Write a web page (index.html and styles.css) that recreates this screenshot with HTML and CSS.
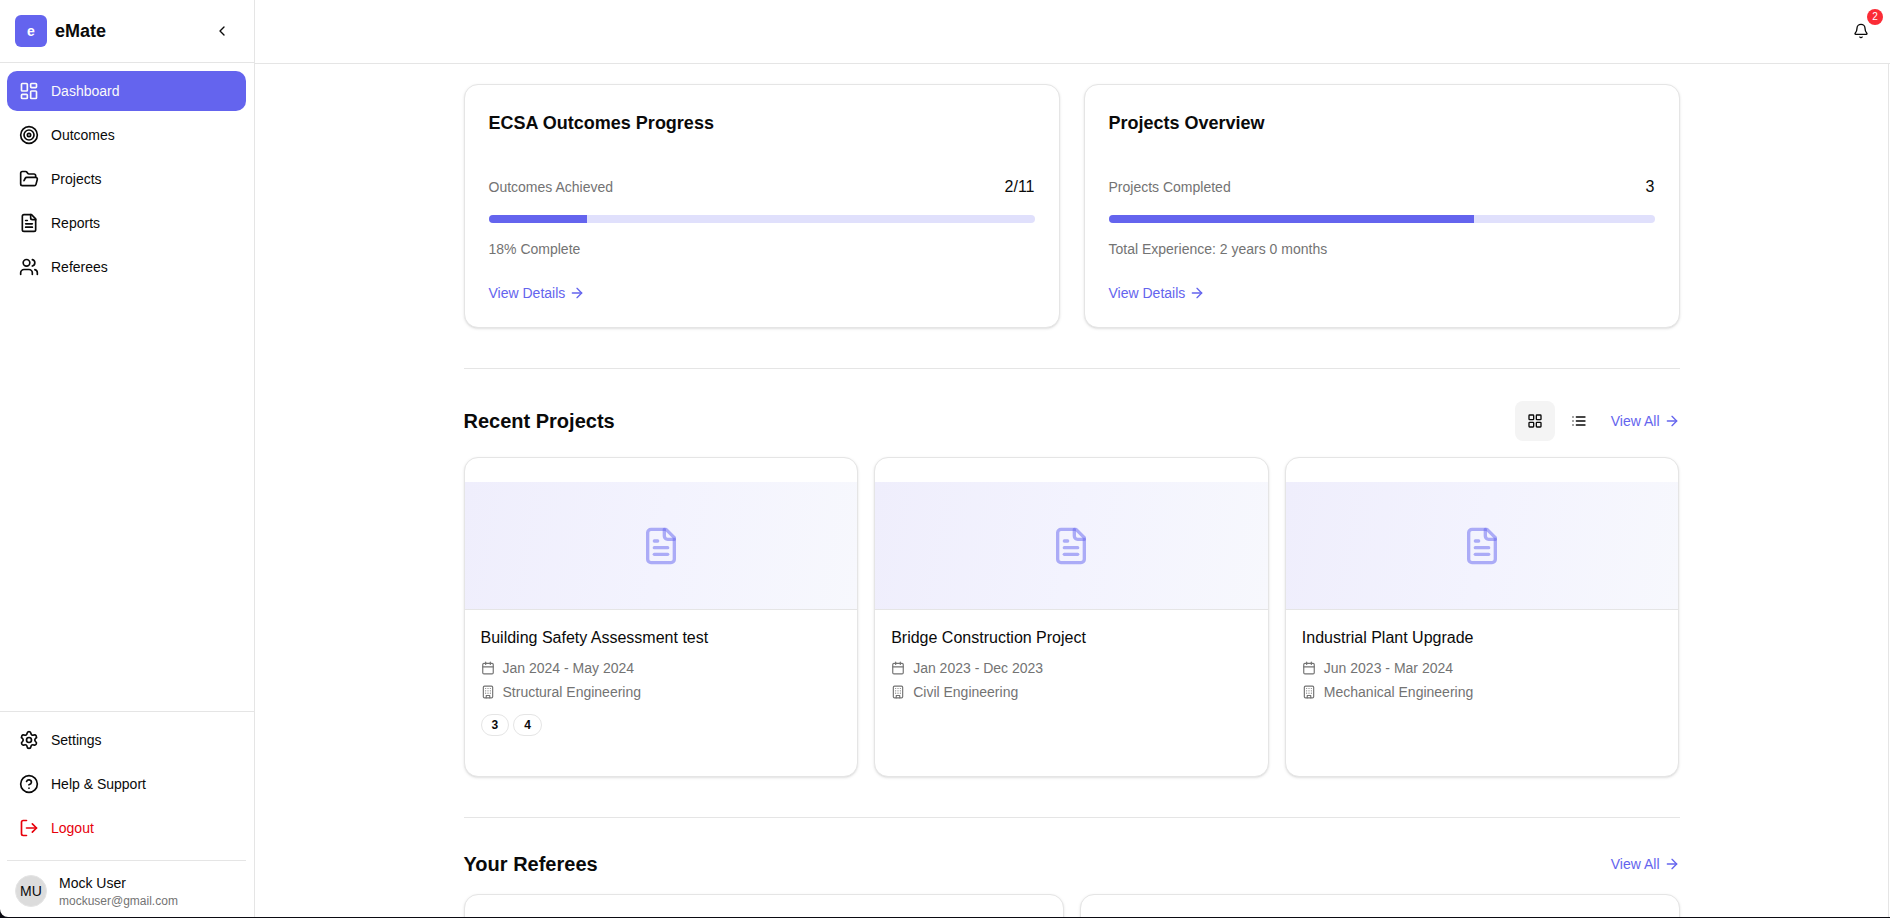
FILE: index.html
```html
<!DOCTYPE html>
<html lang="en">
<head>
<meta charset="utf-8">
<meta name="viewport" content="width=device-width, initial-scale=1">
<title>eMate Dashboard</title>
<link rel="stylesheet" href="styles.css">
</head>
<body>
<svg class="sprite" aria-hidden="true">
  <symbol id="i-dashboard" viewBox="0 0 24 24"><rect width="7" height="9" x="3" y="3" rx="1"/><rect width="7" height="5" x="14" y="3" rx="1"/><rect width="7" height="9" x="14" y="12" rx="1"/><rect width="7" height="5" x="3" y="16" rx="1"/></symbol>
  <symbol id="i-target" viewBox="0 0 24 24"><circle cx="12" cy="12" r="10"/><circle cx="12" cy="12" r="6"/><circle cx="12" cy="12" r="2"/></symbol>
  <symbol id="i-folder" viewBox="0 0 24 24"><path d="m6 14 1.5-2.9A2 2 0 0 1 9.24 10H20a2 2 0 0 1 1.94 2.5l-1.54 6a2 2 0 0 1-1.95 1.5H4a2 2 0 0 1-2-2V5a2 2 0 0 1 2-2h3.9a2 2 0 0 1 1.69.9l.81 1.2a2 2 0 0 0 1.67.9H18a2 2 0 0 1 2 2v2"/></symbol>
  <symbol id="i-file" viewBox="0 0 24 24"><path d="M15 2H6a2 2 0 0 0-2 2v16a2 2 0 0 0 2 2h12a2 2 0 0 0 2-2V7Z"/><path d="M14 2v4a2 2 0 0 0 2 2h4"/><path d="M10 9H8"/><path d="M16 13H8"/><path d="M16 17H8"/></symbol>
  <symbol id="i-users" viewBox="0 0 24 24"><path d="M16 21v-2a4 4 0 0 0-4-4H6a4 4 0 0 0-4 4v2"/><circle cx="9" cy="7" r="4"/><path d="M22 21v-2a4 4 0 0 0-3-3.87"/><path d="M16 3.13a4 4 0 0 1 0 7.75"/></symbol>
  <symbol id="i-settings" viewBox="0 0 24 24"><path d="M9.671 4.136a2.34 2.34 0 0 1 4.659 0 2.34 2.34 0 0 0 3.319 1.915 2.34 2.34 0 0 1 2.33 4.033 2.34 2.34 0 0 0 0 3.831 2.34 2.34 0 0 1-2.33 4.033 2.34 2.34 0 0 0-3.319 1.915 2.34 2.34 0 0 1-4.659 0 2.34 2.34 0 0 0-3.32-1.915 2.34 2.34 0 0 1-2.33-4.033 2.34 2.34 0 0 0 0-3.831A2.34 2.34 0 0 1 6.35 6.051a2.34 2.34 0 0 0 3.319-1.915"/><circle cx="12" cy="12" r="3"/></symbol>
  <symbol id="i-help" viewBox="0 0 24 24"><circle cx="12" cy="12" r="10"/><path d="M9.09 9a3 3 0 0 1 5.83 1c0 2-3 3-3 3"/><path d="M12 17h.01"/></symbol>
  <symbol id="i-logout" viewBox="0 0 24 24"><path d="M9 21H5a2 2 0 0 1-2-2V5a2 2 0 0 1 2-2h4"/><path d="m16 17 5-5-5-5"/><path d="M21 12H9"/></symbol>
  <symbol id="i-chevron" viewBox="0 0 24 24"><path d="m15 18-6-6 6-6"/></symbol>
  <symbol id="i-arrow" viewBox="0 0 24 24"><path d="M5 12h14"/><path d="m12 5 7 7-7 7"/></symbol>
  <symbol id="i-bell" viewBox="0 0 24 24"><path d="M10.268 21a2 2 0 0 0 3.464 0"/><path d="M3.262 15.326A1 1 0 0 0 4 17h16a1 1 0 0 0 .74-1.673C19.41 13.956 18 12.499 18 8A6 6 0 0 0 6 8c0 4.499-1.411 5.956-2.738 7.326"/></symbol>
  <symbol id="i-grid" viewBox="0 0 24 24"><rect width="7" height="7" x="3" y="3" rx="1"/><rect width="7" height="7" x="14" y="3" rx="1"/><rect width="7" height="7" x="14" y="14" rx="1"/><rect width="7" height="7" x="3" y="14" rx="1"/></symbol>
  <symbol id="i-list" viewBox="0 0 24 24"><path d="M3 12h.01"/><path d="M3 18h.01"/><path d="M3 6h.01"/><path d="M8 12h13"/><path d="M8 18h13"/><path d="M8 6h13"/></symbol>
  <symbol id="i-calendar" viewBox="0 0 24 24"><path d="M8 2v4"/><path d="M16 2v4"/><rect width="18" height="18" x="3" y="4" rx="2"/><path d="M3 10h18"/></symbol>
  <symbol id="i-building" viewBox="0 0 24 24"><rect width="16" height="20" x="4" y="2" rx="2"/><path d="M9 22v-4h6v4"/><path d="M8 6h.01"/><path d="M16 6h.01"/><path d="M12 6h.01"/><path d="M12 10h.01"/><path d="M12 14h.01"/><path d="M16 10h.01"/><path d="M16 14h.01"/><path d="M8 10h.01"/><path d="M8 14h.01"/></symbol>
</svg>

<div class="app">
  <aside class="sidebar">
    <div class="brand">
      <span class="brand-mark">e</span>
      <span class="brand-name">eMate</span>
      <button class="collapse" type="button" aria-label="Collapse sidebar"><svg class="icon icon-sm"><use href="#i-chevron"/></svg></button>
    </div>
    <nav class="nav" aria-label="Main">
      <a class="nav-item active" href="#dashboard" aria-current="page"><svg class="icon icon-md"><use href="#i-dashboard"/></svg>Dashboard</a>
      <a class="nav-item" href="#outcomes"><svg class="icon icon-md"><use href="#i-target"/></svg>Outcomes</a>
      <a class="nav-item" href="#projects"><svg class="icon icon-md"><use href="#i-folder"/></svg>Projects</a>
      <a class="nav-item" href="#reports"><svg class="icon icon-md"><use href="#i-file"/></svg>Reports</a>
      <a class="nav-item" href="#referees"><svg class="icon icon-md"><use href="#i-users"/></svg>Referees</a>
    </nav>
    <div class="sidebar-foot">
      <a class="nav-item" href="#settings"><svg class="icon icon-md"><use href="#i-settings"/></svg>Settings</a>
      <a class="nav-item" href="#help"><svg class="icon icon-md"><use href="#i-help"/></svg>Help &amp; Support</a>
      <button class="nav-item danger" type="button"><svg class="icon icon-md"><use href="#i-logout"/></svg>Logout</button>
      <div class="account">
        <span class="avatar">MU</span>
        <div>
          <div class="account-name">Mock User</div>
          <div class="account-mail">mockuser@gmail.com</div>
        </div>
      </div>
    </div>
  </aside>

  <div class="workspace">
    <header class="topbar">
      <button class="bell" type="button" aria-label="Notifications"><svg class="icon icon-sm"><use href="#i-bell"/></svg><span class="bell-count">2</span></button>
    </header>
    <main class="content">
      <div class="column">
        <section class="overview">
          <article class="card stat">
            <h2 class="card-title">ECSA Outcomes Progress</h2>
            <div class="stat-row"><span class="muted">Outcomes Achieved</span><span class="stat-value">2/11</span></div>
            <div class="meter" role="progressbar" aria-label="Outcomes achieved" aria-valuenow="18"><div class="meter-fill" style="width:18%"></div></div>
            <p class="muted">18% Complete</p>
            <a class="link stat-link" href="#outcomes">View Details<svg class="icon icon-sm"><use href="#i-arrow"/></svg></a>
          </article>
          <article class="card stat">
            <h2 class="card-title">Projects Overview</h2>
            <div class="stat-row"><span class="muted">Projects Completed</span><span class="stat-value">3</span></div>
            <div class="meter" role="progressbar" aria-label="Projects completed" aria-valuenow="67"><div class="meter-fill" style="width:67%"></div></div>
            <p class="muted">Total Experience: 2 years 0 months</p>
            <a class="link stat-link" href="#projects">View Details<svg class="icon icon-sm"><use href="#i-arrow"/></svg></a>
          </article>
        </section>

        <section class="section">
          <div class="section-head">
            <h2 class="section-title">Recent Projects</h2>
            <div class="section-tools">
              <div class="view-toggle">
                <button class="toggle on" type="button" aria-label="Grid view"><svg class="icon icon-sm"><use href="#i-grid"/></svg></button>
                <button class="toggle" type="button" aria-label="List view"><svg class="icon icon-sm"><use href="#i-list"/></svg></button>
              </div>
              <a class="link" href="#projects">View All<svg class="icon icon-sm"><use href="#i-arrow"/></svg></a>
            </div>
          </div>
          <div class="projects">
            <article class="card project">
              <div class="cover"><svg class="icon icon-xl"><use href="#i-file"/></svg></div>
              <div class="project-body">
                <h3 class="project-title">Building Safety Assessment test</h3>
                <div class="meta muted"><svg class="icon icon-xs"><use href="#i-calendar"/></svg>Jan 2024 - May 2024</div>
                <div class="meta muted"><svg class="icon icon-xs"><use href="#i-building"/></svg>Structural Engineering</div>
                <div class="tags"><span class="tag">3</span><span class="tag">4</span></div>
              </div>
            </article>
            <article class="card project">
              <div class="cover"><svg class="icon icon-xl"><use href="#i-file"/></svg></div>
              <div class="project-body">
                <h3 class="project-title">Bridge Construction Project</h3>
                <div class="meta muted"><svg class="icon icon-xs"><use href="#i-calendar"/></svg>Jan 2023 - Dec 2023</div>
                <div class="meta muted"><svg class="icon icon-xs"><use href="#i-building"/></svg>Civil Engineering</div>
              </div>
            </article>
            <article class="card project">
              <div class="cover"><svg class="icon icon-xl"><use href="#i-file"/></svg></div>
              <div class="project-body">
                <h3 class="project-title">Industrial Plant Upgrade</h3>
                <div class="meta muted"><svg class="icon icon-xs"><use href="#i-calendar"/></svg>Jun 2023 - Mar 2024</div>
                <div class="meta muted"><svg class="icon icon-xs"><use href="#i-building"/></svg>Mechanical Engineering</div>
              </div>
            </article>
          </div>
        </section>

        <section class="section">
          <div class="section-head">
            <h2 class="section-title">Your Referees</h2>
            <a class="link" href="#referees">View All<svg class="icon icon-sm"><use href="#i-arrow"/></svg></a>
          </div>
          <div class="referees">
            <article class="card referee"></article>
            <article class="card referee"></article>
          </div>
        </section>
      </div>
    </main>
  </div>
</div>
</body>
</html>
```
FILE: styles.css
```css
:root {
  --primary: #6464ee;
  --primary-soft: #e0e0fc;
  --ink: #0a0a0a;
  --muted: #737373;
  --line: #e5e5e5;
}

* { box-sizing: border-box; }

body {
  margin: 0;
  background: #0b0b12;
  color: var(--ink);
  font: 14px/20px "Liberation Sans", Arial, sans-serif;
}

h2, h3, p { margin: 0; }
a { color: inherit; text-decoration: none; }
button { border: 0; padding: 0; background: none; color: inherit; font: inherit; cursor: pointer; }

.sprite { position: absolute; width: 0; height: 0; }

.icon {
  flex: none;
  fill: none;
  stroke: currentColor;
  stroke-width: 2;
  stroke-linecap: round;
  stroke-linejoin: round;
}
.icon-xs { width: 14px; height: 14px; }
.icon-sm { width: 16px; height: 16px; }
.icon-md { width: 20px; height: 20px; }
.icon-xl { width: 40px; height: 40px; }

.app {
  display: flex;
  height: calc(100vh - 1px);
  overflow: hidden;
  background: #fff;
  border-bottom-left-radius: 8px;
}

/* Sidebar */
.sidebar {
  display: flex;
  flex: none;
  flex-direction: column;
  width: 255px;
  border-right: 1px solid var(--line);
}
.brand {
  display: flex;
  align-items: center;
  gap: 8px;
  height: 63px;
  padding: 0 16px 0 15px;
  border-bottom: 1px solid var(--line);
}
.brand-mark {
  display: grid;
  place-items: center;
  width: 32px;
  height: 32px;
  border-radius: 6px;
  background: var(--primary);
  color: #fff;
  font-weight: 700;
}
.brand-name { font-size: 18px; line-height: 28px; font-weight: 700; }
.collapse {
  display: grid;
  place-items: center;
  width: 32px;
  height: 32px;
  margin-left: auto;
}
.nav {
  display: flex;
  flex: 1;
  flex-direction: column;
  gap: 4px;
  padding: 8px;
  padding-left: 7px;
}
.nav-item {
  display: flex;
  align-items: center;
  gap: 12px;
  height: 40px;
  padding: 0 12px;
  border-radius: 10px;
}
.nav-item.active { background: var(--primary); color: #fafafa; }
.nav-item.danger { color: #e7000b; }
.sidebar-foot {
  display: flex;
  flex-direction: column;
  gap: 4px;
  padding: 8px 8px 8px 7px;
  border-top: 1px solid var(--line);
}
.account {
  display: flex;
  align-items: center;
  gap: 12px;
  margin-top: 8px;
  padding: 12px 8px 0;
  border-top: 1px solid var(--line);
}
.avatar {
  display: grid;
  place-items: center;
  width: 32px;
  height: 32px;
  border: 1px solid var(--line);
  border-radius: 50%;
  background: #dcdcdc;
}
.account-mail { color: var(--muted); font-size: 12px; line-height: 16px; }

/* Workspace */
.workspace { display: flex; flex: 1; flex-direction: column; min-width: 0; }
.topbar {
  display: flex;
  flex: none;
  align-items: center;
  justify-content: flex-end;
  height: 64px;
  padding: 0 11px 2px;
  border-bottom: 1px solid var(--line);
}
.bell { position: relative; display: grid; place-items: center; width: 36px; height: 36px; }
.bell-count {
  position: absolute;
  top: -4px;
  right: -4px;
  width: 16px;
  height: 16px;
  border-radius: 50%;
  background: #fb2c36;
  color: #fff;
  font-size: 10px;
  line-height: 16px;
  text-align: center;
}
.content {
  flex: 1;
  min-height: 0;
  margin-right: 1px;
  padding: 20px 32px 0;
  overflow: hidden;
  border-right: 1px solid var(--line);
}
.column { max-width: 1216px; margin: 0 auto; }

.muted { color: var(--muted); }
.link { display: inline-flex; align-items: center; gap: 4px; color: var(--primary); }

.card {
  border: 1px solid var(--line);
  border-radius: 14px;
  background: #fff;
  box-shadow: 0 1px 3px rgba(0, 0, 0, 0.1), 0 1px 2px -1px rgba(0, 0, 0, 0.1);
}

/* Overview */
.overview { display: grid; grid-template-columns: 1fr 1fr; gap: 24px; }
.stat { padding: 24px; }
.card-title { font-size: 18px; line-height: 28px; }
.stat-row {
  display: flex;
  align-items: center;
  justify-content: space-between;
  margin: 38px 0 16px;
}
.stat-value { font-size: 16px; line-height: 24px; }
.meter {
  height: 8px;
  margin-bottom: 16px;
  overflow: hidden;
  border-radius: 4px;
  background: var(--primary-soft);
}
.meter-fill { height: 100%; background: var(--primary); }
.stat-link { display: flex; width: fit-content; margin-top: 24px; }

/* Sections */
.section { margin-top: 40px; padding-top: 32px; border-top: 1px solid var(--line); }
.section-head {
  display: flex;
  align-items: center;
  justify-content: space-between;
  margin-bottom: 16px;
}
.section-title { font-size: 20px; line-height: 28px; }
.section-tools { display: flex; align-items: center; gap: 12px; }
.view-toggle { display: flex; gap: 4px; }
.toggle { display: grid; place-items: center; width: 40px; height: 40px; border-radius: 8px; }
.toggle.on { background: #f4f4f4; }

.projects { display: grid; grid-template-columns: repeat(3, 1fr); gap: 16px; }
.project { padding: 24px 0; overflow: hidden; }
.cover {
  display: grid;
  place-items: center;
  height: 128px;
  border-bottom: 1px solid var(--line);
  background: linear-gradient(100deg, #efeefc, #f3f3fe 50%, #f7f8fd);
  color: rgba(100, 100, 240, 0.5);
}
.project-body { padding: 16px; }
.project-title { margin-bottom: 8px; font-size: 16px; line-height: 24px; font-weight: 400; }
.meta { display: flex; align-items: center; gap: 8px; }
.meta + .meta { margin-top: 4px; }
.tags { display: flex; gap: 4px; margin-top: 12px; }
.tag {
  padding: 2px 10px;
  border: 1px solid var(--line);
  border-radius: 11px;
  font-size: 12px;
  line-height: 16px;
  font-weight: 700;
}

.referees { display: grid; grid-template-columns: 1fr 1fr; gap: 16px; }
.referee { min-height: 160px; }
```
